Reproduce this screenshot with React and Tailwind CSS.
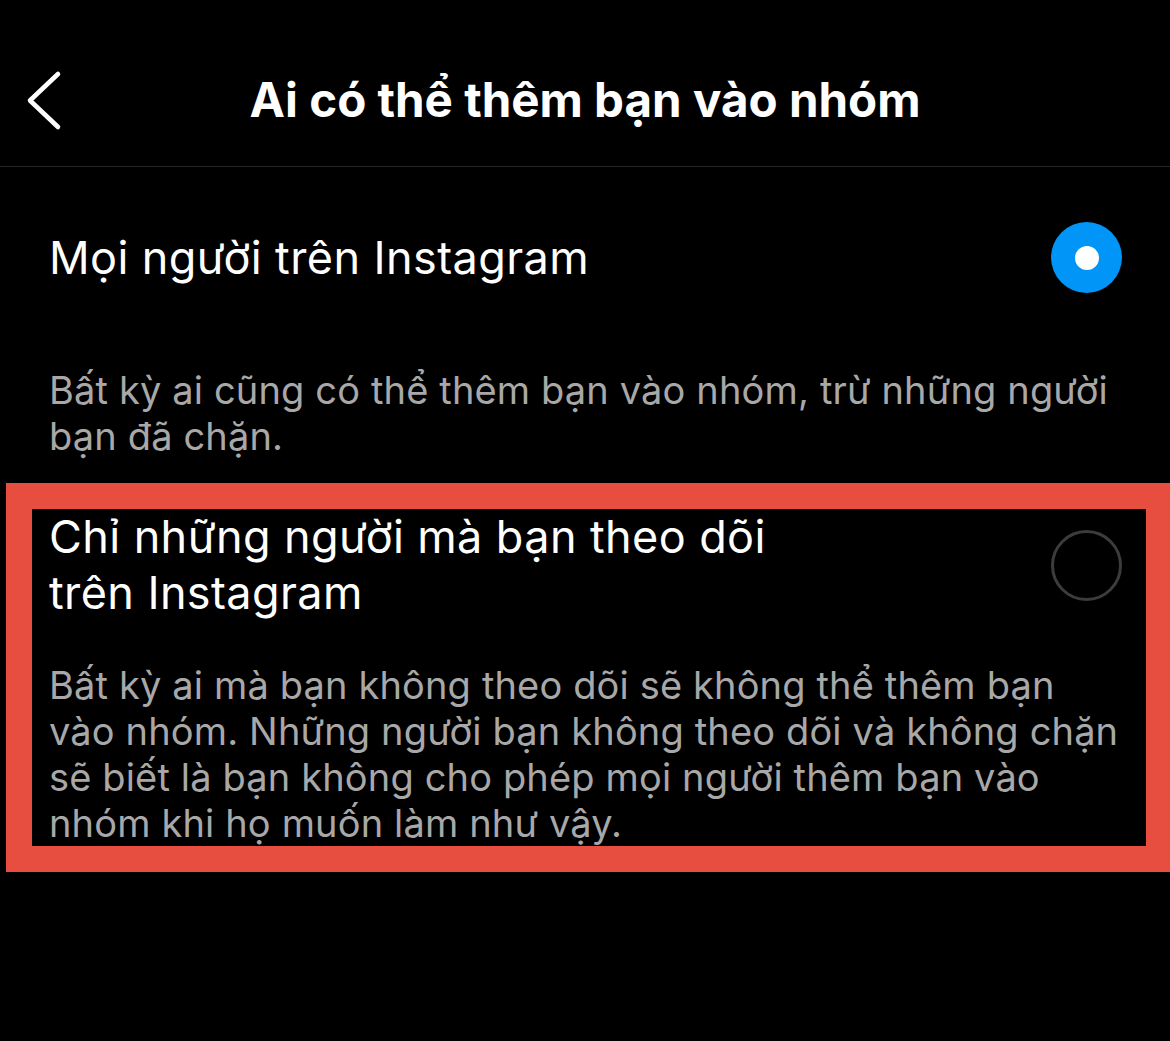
const font = { fontFamily: 'Inter, "Noto Sans", "Liberation Sans", sans-serif' };

function Radio({ checked }) {
    if (checked) {
        return (
            <div className="flex h-[71px] w-[71px] shrink-0 items-center justify-center rounded-full bg-[#0095f6]">
                <div className="h-[24px] w-[24px] rounded-full bg-white" />
            </div>
        );
    }
    return <div className="h-[71px] w-[71px] shrink-0 rounded-full border-[3px] border-[#3c3c3c]" />;
}

export default function App() {
    return (
        <div className="min-h-[1041px] w-full bg-black text-white" style={font}>
            {/* header */}
            <header className="relative flex h-[167px] items-center justify-center border-b border-[#262626] pt-[34px]">
                <button className="absolute left-[24px] top-[70px] text-white">
                    <svg width="40" height="62" viewBox="0 0 40 62" fill="none" stroke="currentColor" strokeWidth="4.6" strokeLinecap="round" strokeLinejoin="round">
                        <polyline points="34,4 6,30.5 34,57" />
                    </svg>
                </button>
                <h1 className="text-[47.5px] font-bold leading-[56px]">Ai có thể thêm bạn vào nhóm</h1>
            </header>

            {/* option 1 */}
            <section className="pl-[49px] pr-[48px] pt-[55px]">
                <div className="flex items-center justify-between">
                    <p className="text-[45px] leading-[56px] tracking-[0.4px]">Mọi người trên Instagram</p>
                    <Radio checked />
                </div>
                <p className="mt-[74px] text-[38px] leading-[46px] tracking-[0.15px] text-[#a8a8a8]">
                    Bất kỳ ai cũng có thể thêm bạn vào nhóm, trừ những người
                    <br />
                    bạn đã chặn.
                </p>
            </section>

            {/* option 2, highlighted */}
            <section className="ml-[6px] mt-[24px] border-[26px] border-r-[24px] border-[#e84e40] pl-[17px] pr-[24px]">
                <div className="flex items-center justify-between">
                    <p className="text-[45px] leading-[56px] tracking-[0.4px]">
                        Chỉ những người mà bạn theo dõi
                        <br />
                        trên Instagram
                    </p>
                    <Radio />
                </div>
                <p className="mt-[41px] text-[38px] leading-[46px] tracking-[0.15px] text-[#a8a8a8]">
                    Bất kỳ ai mà bạn không theo dõi sẽ không thể thêm bạn
                    <br />
                    vào nhóm. Những người bạn không theo dõi và không chặn
                    <br />
                    sẽ biết là bạn không cho phép mọi người thêm bạn vào
                    <br />
                    nhóm khi họ muốn làm như vậy.
                </p>
            </section>
        </div>
    );
}
